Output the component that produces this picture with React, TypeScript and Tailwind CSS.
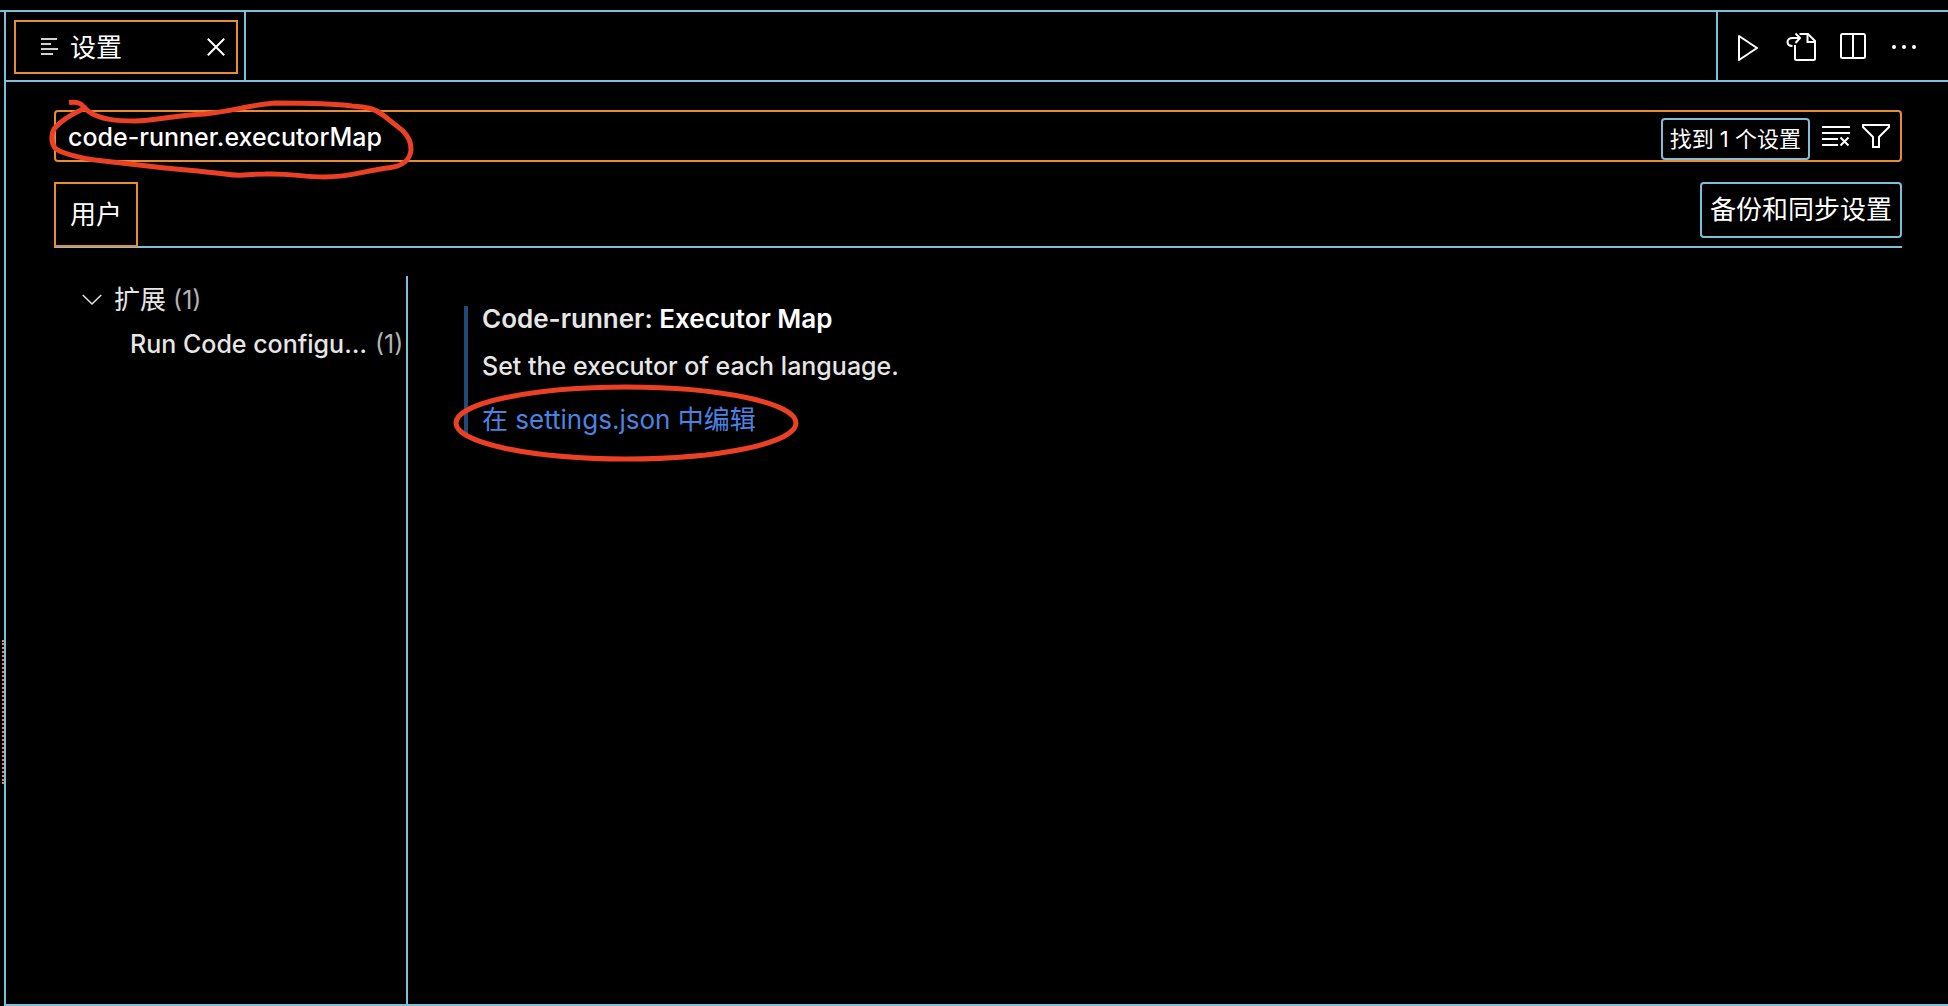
import type { ReactNode } from "react";

function IconButton({ label, children }: { label: string; children: ReactNode }) {
  return (
    <button type="button" aria-label={label} className="flex shrink-0 items-center justify-center">
      {children}
    </button>
  );
}

function SettingsTab() {
  return (
    <div className="flex border-r-2 border-[#7fbfdc] pt-2 pr-1.5 pb-1.5 pl-2">
      <div className="flex h-[54px] w-56 items-center border-2 border-[#e98c37] pr-[11px] pl-[25px]">
        <svg width="18" height="20" viewBox="0 0 18 20" fill="none" stroke="#d0d0d0" strokeWidth="2" aria-hidden="true">
          <path d="M0 2h16M0 7h10M0 12h17M0 17h12" />
        </svg>
        <button type="button" className="ml-[11px] grow pt-0.5 text-left text-white">
          设置
        </button>
        <IconButton label="关闭">
          <svg width="18" height="18" viewBox="0 0 18 18" fill="none" stroke="#fff" strokeWidth="2" aria-hidden="true">
            <path d="M.8.8l16.4 16.4M17.2.8L.8 17.2" />
          </svg>
        </IconButton>
      </div>
    </div>
  );
}

function EditorActions() {
  return (
    <div className="flex items-center border-l-2 border-[#7fbfdc] pt-0.5 pr-[30px] pl-5">
      <IconButton label="运行">
        <svg width="20" height="28" viewBox="0 0 20 28" fill="none" stroke="#fff" strokeWidth="2" strokeLinejoin="round" aria-hidden="true">
          <path d="M1 3v24l18-12z" />
        </svg>
      </IconButton>
      <span className="w-7" />
      <IconButton label="打开设置 (json)">
        <svg width="30" height="30" viewBox="0 0 30 30" fill="none" stroke="#fff" strokeWidth="2" aria-hidden="true">
          <path d="M13.500 2H22l7 7v17.500q0 1.500-1.500 1.500H10.500q-1.500 0-1.500-1.500V13" />
          <path d="M21.500 2v8H29" />
          <path d="M6.500 14C3 14 1.500 12 1.500 10S3.500 6 6.500 6h7" />
          <path d="M9.500 1.500L14 6l-4.500 5" />
        </svg>
      </IconButton>
      <span className="w-6" />
      <IconButton label="拆分编辑器">
        <svg width="26" height="28" viewBox="0 0 26 28" fill="none" stroke="#fff" strokeWidth="2" aria-hidden="true">
          <rect x="1" y="1" width="24" height="24" rx="1.500" />
          <path d="M13 1v24" />
        </svg>
      </IconButton>
      <span className="w-6" />
      <IconButton label="更多操作">
        <svg width="28" height="28" viewBox="0 0 28 28" fill="#fff" aria-hidden="true">
          <circle cx="4" cy="14" r="2" />
          <circle cx="14" cy="14" r="2" />
          <circle cx="24" cy="14" r="2" />
        </svg>
      </IconButton>
    </div>
  );
}

function SearchBar() {
  return (
    <div className="relative flex h-[52px] items-center rounded border-2 border-[#e98c37] pr-2.5 pl-3">
      <input
        type="text"
        aria-label="搜索设置"
        defaultValue="code-runner.executorMap"
        className="min-w-0 grow bg-transparent pt-0.5 text-[25px] font-medium text-white outline-none"
      />
      <output className="mt-1.5 flex h-[42px] items-center rounded border-2 border-[#7fbfdc] px-[7px] text-[22px] whitespace-nowrap text-white">
        找到 1 个设置
      </output>
      <span className="w-3" />
      <IconButton label="清除设置搜索输入">
        <svg width="28" height="28" viewBox="0 0 28 28" fill="none" stroke="#fff" strokeWidth="2" aria-hidden="true">
          <path d="M0 5h28M0 11h28M0 17h16M0 23h16" />
          <path d="M18.500 15.500l8 8M26.500 15.500l-8 8" />
        </svg>
      </IconButton>
      <span className="w-3" />
      <IconButton label="筛选设置">
        <svg width="28" height="28" viewBox="0 0 28 28" fill="none" stroke="#fff" strokeWidth="2" aria-hidden="true">
          <path d="M1 3h26v2L17 15v10h-6V15L1 5z" />
        </svg>
      </IconButton>
      <svg
        width="380"
        height="92"
        viewBox="40 92 380 92"
        className="pointer-events-none absolute -top-5 -left-4"
        fill="none"
        stroke="#ea4025"
        strokeWidth="5"
        aria-hidden="true"
      >
        <path d="M69 102.500C82 101 82 106 88 111C100 120 118 121 135 121C155 121 175 115 205 114C233 111 250 105 275 103C300 103 330 103 352 106C366 107 374 108 383 115L402 130C409 137 411 142 411 150C410 160 402 166 391 167.500C362 171 352 177 325 177C300 177 292 173 265 174C245 174 243 177 225 174C200 171 185 170 165 168L95 160C80 158 60 153 55 148C51 143 51 134 54 129C60 121 74 113 85 108" />
      </svg>
    </div>
  );
}

function ScopeBar() {
  return (
    <div className="mt-5 flex h-[66px] items-start justify-between border-b-2 border-[#7fbfdc]">
      <button type="button" className="h-[65px] border-2 border-[#e98c37] px-3.5 text-white">
        用户
      </button>
      <button type="button" className="h-14 rounded border-2 border-[#7fbfdc] px-2 text-white">
        备份和同步设置
      </button>
    </div>
  );
}

function SettingsTree() {
  return (
    <nav aria-label="设置目录" className="w-[354px] shrink-0 border-r-2 border-[#7fbfdc] pt-0.5 text-[#e6e6e6]">
      <div className="flex h-11 items-center pl-7">
        <button type="button" aria-expanded="true" className="flex items-center">
          <svg width="20" height="12" viewBox="0 0 20 12" fill="none" stroke="#e6e6e6" strokeWidth="1.500" aria-hidden="true">
            <path d="M.8 1L10 10l9.200-9" />
          </svg>
          <span className="ml-3">扩展</span>
          <span className="ml-[7px] text-[25px] text-[#b3b3b3]">(1)</span>
        </button>
      </div>
      <div className="flex h-11 items-center pl-[76px] text-[25px] font-medium whitespace-nowrap">
        <button type="button">Run Code configu…</button>
        <span className="ml-2 font-normal text-[#b3b3b3]">(1)</span>
      </div>
    </nav>
  );
}

function SettingItem() {
  return (
    <section className="mt-[30px] ml-14 flex self-start border-l-4 border-[#1f4a77] pb-0.5">
      <div className="ml-3.5 flex flex-col items-start text-[#e6e6e6]">
        <h2 className="h-[26px] leading-[26px] font-semibold">
          Code-runner: <span className="text-white">Executor Map</span>
        </h2>
        <p className="mt-[19px] h-[30px] text-[25px] leading-[30px] font-medium">Set the executor of each language.</p>
        <div className="relative mt-6 h-[30px]">
          <a href="#settings-json" className="block leading-[30px] text-[#4b83e0]">
            在 settings.json 中编辑
          </a>
          <svg
            width="350"
            height="80"
            viewBox="0 0 350 80"
            className="pointer-events-none absolute -top-[22px] -left-8"
            fill="none"
            stroke="#ea4025"
            strokeWidth="5"
            aria-hidden="true"
          >
            <ellipse cx="176" cy="40" rx="170" ry="36" />
          </svg>
        </div>
      </div>
    </section>
  );
}

export default function App() {
  return (
    <div className="flex min-h-screen flex-col bg-black pt-2.5 font-['Inter','Noto_Sans_CJK_SC',sans-serif] text-[26px] leading-8">
      <div className="flex grow flex-col border-t-2 border-[#7fbfdc] pl-1">
        <div className="relative flex grow flex-col border-b-2 border-l-2 border-[#7fbfdc]">
          <div className="absolute top-[628px] -left-1 h-36 w-0 border-l-2 border-dotted border-[#e98c37]" />
          <header className="flex justify-between border-b-2 border-[#7fbfdc]">
            <SettingsTab />
            <EditorActions />
          </header>
          <main className="flex grow flex-col pt-7 pl-12">
            <div className="mr-[46px]">
              <SearchBar />
              <ScopeBar />
            </div>
            <div className="mt-7 flex grow">
              <SettingsTree />
              <SettingItem />
            </div>
          </main>
        </div>
      </div>
    </div>
  );
}
